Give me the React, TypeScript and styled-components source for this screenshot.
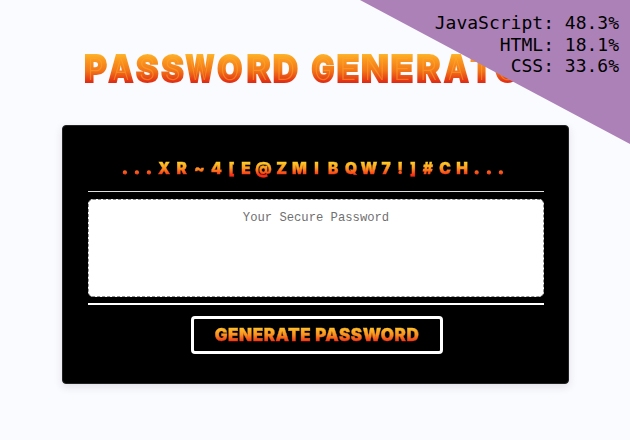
import React from "react";
import styled, { createGlobalStyle, css } from "styled-components";

const GlobalStyle = createGlobalStyle`
  * { box-sizing: border-box; }
  body { margin: 0; background: #fafbff; overflow: hidden; }
`;

const Page = styled.main`
  position: relative;
  width: 630px;
  height: 440px;
  overflow: hidden;
  padding-top: 49px;
  background: #fafbff;
  font-family: "Inter", sans-serif;
`;

const fire = css`
  color: transparent;
  -webkit-text-fill-color: transparent;
  background-clip: text;
  -webkit-background-clip: text;
`;

const Title = styled.h1`
  display: flex;
  margin: 0 0 0 83px;
  height: 40px;
  font-size: 37.5px;
  line-height: 40px;
  font-weight: 900;
`;

const Glyph = styled.span<{ $w: number; $s: number }>`
  ${fire}
  position: relative;
  flex: none;
  display: flex;
  justify-content: center;
  width: ${(p) => p.$w / p.$s}px;
  margin: 0 ${(p) => (p.$w - p.$w / p.$s) / 2}px;
  white-space: pre;
  background-image: linear-gradient(#fdb62b 12%, #fb9c20 25%, #f27518 55%, #df2413 86%);
  -webkit-text-stroke: 1.9px transparent;
  transform: scaleX(${(p) => p.$s});

  &::after {
    content: attr(data-char);
    position: absolute;
    inset: 0;
    text-align: center;
    font-size: 30px;
    font-weight: 200;
    -webkit-text-fill-color: rgba(255, 168, 48, 0.5);
    -webkit-text-stroke: 0;
  }
`;

const Card = styled.section`
  display: flex;
  flex-direction: column;
  width: 507px;
  height: 259px;
  margin: 36px 0 0 62px;
  padding: 32px 24px 0 25px;
  background: #000;
  border: 1px solid #222;
  border-radius: 4px;
  box-shadow: 0 3px 8px rgba(40, 20, 60, 0.12);
`;

const Sample = styled.h2`
  display: flex;
  align-self: flex-start;
  margin: 0 0 0 31px;
  height: 22px;
  font: 900 15.5px/22px "Inter", sans-serif;
`;

const Symbol = styled.span<{ $w: number; $bold: boolean }>`
  ${fire}
  display: block;
  width: ${(p) => p.$w}px;
  text-align: center;
  background-image: linear-gradient(#ffcf28 18%, #ff9a20 45%, #fa2a14 78%);
  -webkit-text-stroke: ${(p) => (p.$bold ? 1.2 : 0.4)}px transparent;
`;

const Rule = styled.hr<{ $thick?: boolean }>`
  flex: none;
  width: 100%;
  height: ${(p) => (p.$thick ? 2 : 1)}px;
  margin: ${(p) => (p.$thick ? "6px 0 11px" : "11px 0 7px")};
  border: 0;
  background: ${(p) => (p.$thick ? "#fff" : "#e0e0e0")};
`;

const Output = styled.textarea`
  flex: none;
  display: block;
  width: 100%;
  height: 98px;
  padding: 11px 0;
  resize: none;
  text-align: center;
  background: #fff;
  border: 1px dashed #8e8e8e;
  border-radius: 5px;
  font: 12.2px/15px "Liberation Mono", monospace;
  &::placeholder { color: #707070; opacity: 1; }
`;

const Button = styled.button`
  align-self: center;
  width: 252px;
  height: 38px;
  margin-left: 1px;
  padding: 0;
  border: 3px solid #fff;
  border-radius: 4px;
  background: #000;
`;

const ButtonLabel = styled.span`
  ${fire}
  display: block;
  font: 900 17px/29px "Inter", sans-serif;
  letter-spacing: 0.55px;
  padding-left: 1px;
  white-space: nowrap;
  background-image: linear-gradient(#ffbd29 25%, #fb8e20 48%, #ee2413 74%);
  -webkit-text-stroke: 0.4px transparent;
`;

const Corner = styled.aside`
  position: absolute;
  top: 0;
  right: 0;
  width: 270px;
  height: 144px;
  padding: 12px 11px 0 0;
  clip-path: polygon(0 0, 100% 0, 100% 100%);
  background: #ac81b8;
  color: #000;
  text-align: right;
  font: 18px/21.5px "DejaVu Sans Mono", monospace;
`;

const titleGlyphs: [string, number, number][] = [
  ["P", 25, 0.92], ["A", 26.5, 0.83], ["S", 25.5, 0.9], ["S", 24.5, 0.9],
  ["W", 31, 0.71], ["O", 29, 0.86], ["R", 28, 0.95], ["D", 26.5, 0.92],
  [" ", 10.5, 1],
  ["G", 26, 0.81], ["E", 25.5, 0.98], ["N", 28.5, 0.95], ["E", 25.5, 0.98],
  ["R", 27.5, 0.95], ["A", 27, 0.83], ["T", 23.5, 0.86], ["O", 28.5, 0.86], ["R", 27.5, 0.95],
];

const symbols: [string, number][] = [
  [".", 12], [".", 12], [".", 12], ["X", 18], ["R", 17.5], ["~", 17.5],
  ["4", 17], ["[", 13], ["E", 16], ["@", 19], ["Z", 17.5], ["M", 18],
  ["I", 16], ["B", 17.5], ["Q", 18], ["W", 18], ["7", 16], ["!", 12.5],
  ["]", 13], ["#", 17], ["C", 17], ["H", 17], [".", 12.5], [".", 12], [".", 12],
];

const languages = ["JavaScript: 48.3%", "HTML: 18.1%", "CSS: 33.6%"];

export default function App() {
  return (
    <>
      <GlobalStyle />
      <Page>
        <Title>
          {titleGlyphs.map(([char, width, scale], i) => (
            <Glyph key={i} $w={width} $s={scale} data-char={char}>{char}</Glyph>
          ))}
        </Title>
        <Card>
          <Sample>
            {symbols.map(([char, width], i) => (
              <Symbol key={i} $w={width} $bold={char === "."}>{char}</Symbol>
            ))}
          </Sample>
          <Rule />
          <Output readOnly placeholder="Your Secure Password" />
          <Rule $thick />
          <Button><ButtonLabel>GENERATE PASSWORD</ButtonLabel></Button>
        </Card>
        <Corner>
          {languages.map((line) => <div key={line}>{line}</div>)}
        </Corner>
      </Page>
    </>
  );
}
